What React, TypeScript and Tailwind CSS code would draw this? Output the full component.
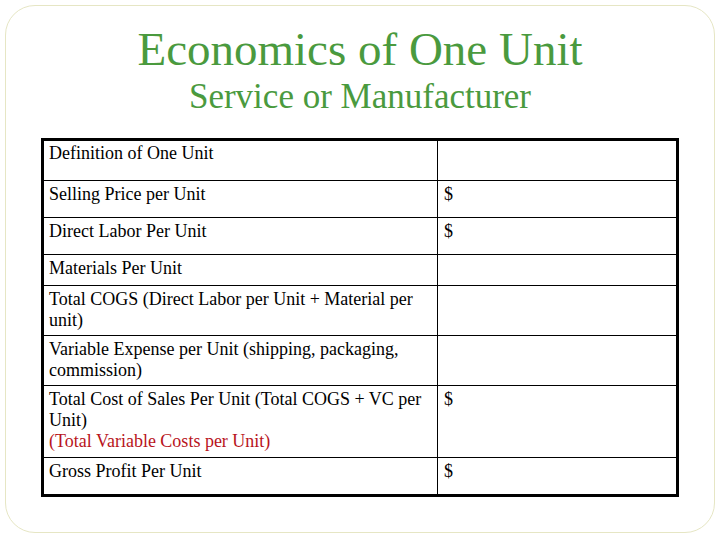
import React from "react";

const serif = { fontFamily: '"Liberation Serif", "Times New Roman", serif' };

type Row = { h: string; left: React.ReactNode; right?: string; first?: boolean };

export default function App() {
  const rows: Row[] = [
    { h: "h-[39px]", left: "Definition of One Unit", first: true },
    { h: "h-[37px]", left: "Selling Price per Unit", right: "$" },
    { h: "h-[37px]", left: "Direct Labor Per Unit", right: "$" },
    { h: "h-[31px]", left: "Materials Per Unit" },
    { h: "h-[50px]", left: "Total COGS (Direct Labor per Unit + Material per unit)" },
    { h: "h-[50px]", left: "Variable Expense per Unit (shipping, packaging, commission)" },
    {
      h: "h-[72px]",
      left: (
        <>
          Total Cost of Sales Per Unit (Total COGS + VC per Unit)
          <br />
          <span className="text-[#b8141c]">(Total Variable Costs per Unit)</span>
        </>
      ),
      right: "$",
    },
    { h: "h-[37px]", left: "Gross Profit Per Unit", right: "$" },
  ];

  return (
    <div className="w-[720px] h-[540px] bg-white overflow-hidden p-[5px] pb-[7px]" style={serif}>
      <div className="w-full h-full rounded-[30px] border border-[#e6e6c4] flex flex-col items-center pt-[20px]">
        <div className="text-[47px] leading-[47px] text-[#4a9a3e]">Economics of One Unit</div>
        <div className="text-[35px] leading-[35px] text-[#4a9a3e] mt-[6px]">Service or Manufacturer</div>
        <div className="mt-[24px] w-[638px] border-[3px] border-black self-start ml-[35px] flex flex-col text-[18px] leading-[21px] text-black">
          {rows.map((r, i) => (
            <div key={i} className={`flex ${r.h} ${r.first ? "" : "border-t border-black"}`}>
              <div className={`w-[394px] shrink-0 border-r border-black pl-[5px] pr-[4px] ${r.first ? "pt-[2px]" : "pt-[3px]"}`}>
                {r.left}
              </div>
              <div className={`flex-1 pl-[6px] ${r.first ? "pt-[2px]" : "pt-[3px]"}`}>{r.right}</div>
            </div>
          ))}
        </div>
      </div>
    </div>
  );
}
